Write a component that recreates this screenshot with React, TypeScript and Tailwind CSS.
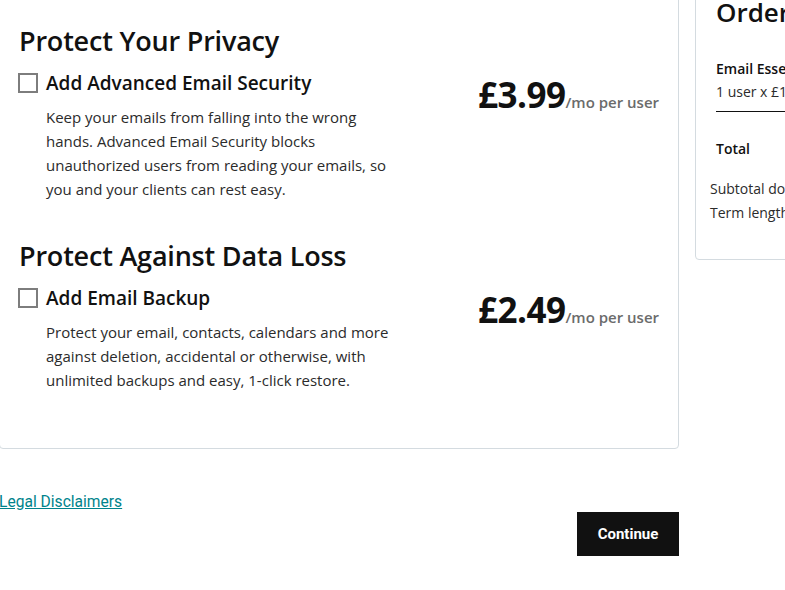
const sans = "font-['Open_Sans','Noto_Sans',sans-serif]";

function Checkbox() {
  return <span className="mt-[3px] block h-[20px] w-[20px] shrink-0 border-2 border-[#7d7d7d] bg-white" />;
}

function AddOn({ title, heading, price, body }: { title: string; heading: string; price: string; body: string }) {
  return (
    <section>
      <h2 className="text-[27px] font-semibold leading-[32px] tracking-[-0.2px] text-[#111]">{heading}</h2>
      <div className="mt-[13px] flex items-start justify-between">
        <div className="-ml-[1px] flex gap-[8px]">
          <Checkbox />
          <div>
            <h3 className="text-[19px] font-semibold leading-[26px] text-[#111]">{title}</h3>
            <p className="mt-[9px] w-[356px] text-[15px] leading-[24px] text-[#2b2b2b]">{body}</p>
          </div>
        </div>
        <div className="flex items-baseline pt-[5px]">
          <span className="text-[35px] font-bold leading-[40px] tracking-[-0.5px] text-[#111]">{price}</span>
          <span className="text-[15px] font-semibold text-[#6b6b6b]">/mo per user</span>
        </div>
      </div>
    </section>
  );
}

export default function App() {
  return (
    <div className={`${sans} h-[590px] w-[785px] overflow-hidden bg-white`}>
      <div className="-ml-[1px] -mt-[12px] flex gap-[16px]">
        <div className="w-[680px] shrink-0">
          <div className="rounded-[4px] border border-[#d4dbe0] px-[19px] pb-[56px] pt-[36px]">
            <AddOn
              heading="Protect Your Privacy"
              title="Add Advanced Email Security"
              price="£3.99"
              body="Keep your emails from falling into the wrong hands. Advanced Email Security blocks unauthorized users from reading your emails, so you and your clients can rest easy."
            />
            <div className="mt-[39px]">
              <AddOn
                heading="Protect Against Data Loss"
                title="Add Email Backup"
                price="£2.49"
                body="Protect your email, contacts, calendars and more against deletion, accidental or otherwise, with unlimited backups and easy, 1-click restore."
              />
            </div>
          </div>
          <a href="#" className="mt-[43px] block font-['Roboto',sans-serif] text-[15.6px] leading-[20px] text-[#00838c] underline">
            Legal Disclaimers
          </a>
          <div className="flex justify-end">
            <button className="h-[44px] w-[102px] bg-[#111] font-['Roboto',sans-serif] text-[15px] font-bold text-white">
              Continue
            </button>
          </div>
        </div>
        <div className="w-[300px] shrink-0">
          <div className="rounded-[4px] border border-[#d4dbe0] pb-[34px] pl-[14px] pt-[7px]">
            <h2 className="pl-[6px] text-[26px] font-semibold leading-[32px] text-[#111]">Order Summary</h2>
            <div className="ml-[6px] mt-[30px] border-b border-[#111] pb-[7px]">
              <div className="text-[14px] font-semibold leading-[22px] text-[#111]">Email Essentials</div>
              <div className="text-[14px] leading-[24px] text-[#2b2b2b]">1 user x £1.99/mo</div>
            </div>
            <div className="ml-[6px] mt-[25px] text-[14px] font-semibold leading-[24px] text-[#111]">Total</div>
            <div className="mt-[16px] text-[14px] leading-[24px] text-[#2b2b2b]">
              <div>Subtotal does not include tax</div>
              <div>Term length: 1 year</div>
            </div>
          </div>
        </div>
      </div>
    </div>
  );
}
